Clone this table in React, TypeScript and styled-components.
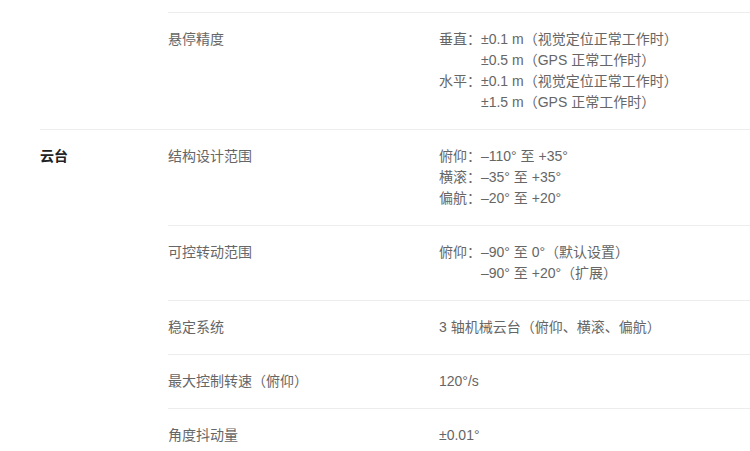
import React from "react";
import styled, { createGlobalStyle } from "styled-components";

const GlobalStyle = createGlobalStyle`
  body {
    margin: 0;
    background: #ffffff;
    font-family: "Liberation Sans", "Noto Sans CJK SC", sans-serif;
  }
`;

const Page = styled.div`
  padding: 12px 0 0 40px;
`;

const Group = styled.div<{ $first?: boolean }>`
  display: grid;
  grid-template-columns: 128px 1fr;
  border-top: ${(p) => (p.$first ? "none" : "1px solid #ededed")};
`;

const Category = styled.div`
  padding: 16px 0;
  font-size: 14px;
  line-height: 21px;
  font-weight: 600;
  color: #222;
`;

const Rows = styled.div`
  display: flex;
  flex-direction: column;
`;

const Row = styled.div<{ $first?: boolean }>`
  display: grid;
  grid-template-columns: 271px 1fr;
  padding: 16px 0;
  border-top: ${(p) => (p.$first ? "none" : "1px solid #ededed")};
  font-size: 14px;
  line-height: 21px;
  color: #666;
`;

const Label = styled.div`
  white-space: nowrap;
`;

const Value = styled.div`
  display: grid;
  grid-template-columns: auto 1fr;
  white-space: nowrap;
`;

const Prefix = styled.span`
  grid-column: 1;
`;

const Text = styled.span`
  grid-column: 2;
`;

type Line = { prefix?: string; text: string };
type Spec = { label: string; lines: Line[] };
type Section = { name: string; specs: Spec[] };

const sections: Section[] = [
  {
    name: "",
    specs: [
      {
        label: "悬停精度",
        lines: [
          { prefix: "垂直：", text: "±0.1 m（视觉定位正常工作时）" },
          { text: "±0.5 m（GPS 正常工作时）" },
          { prefix: "水平：", text: "±0.1 m（视觉定位正常工作时）" },
          { text: "±1.5 m（GPS 正常工作时）" },
        ],
      },
    ],
  },
  {
    name: "云台",
    specs: [
      {
        label: "结构设计范围",
        lines: [
          { prefix: "俯仰：", text: "–110° 至 +35°" },
          { prefix: "横滚：", text: "–35° 至 +35°" },
          { prefix: "偏航：", text: "–20° 至 +20°" },
        ],
      },
      {
        label: "可控转动范围",
        lines: [
          { prefix: "俯仰：", text: "–90° 至 0°（默认设置）" },
          { text: "–90° 至 +20°（扩展）" },
        ],
      },
      { label: "稳定系统", lines: [{ text: "3 轴机械云台（俯仰、横滚、偏航）" }] },
      { label: "最大控制转速（俯仰）", lines: [{ text: "120°/s" }] },
      { label: "角度抖动量", lines: [{ text: "±0.01°" }] },
    ],
  },
];

export default function App() {
  return (
    <>
      <GlobalStyle />
      <Page>
        {sections.map((s, si) => (
          <Group key={si} $first={si === 0}>
            <Category>{s.name}</Category>
            <Rows>
              {s.specs.map((spec, i) => (
                <Row key={spec.label} $first={si > 0 && i === 0}>
                  <Label>{spec.label}</Label>
                  <Value>
                    {spec.lines.map((l, j) => (
                      <React.Fragment key={j}>
                        {l.prefix && <Prefix>{l.prefix}</Prefix>}
                        <Text>{l.text}</Text>
                      </React.Fragment>
                    ))}
                  </Value>
                </Row>
              ))}
            </Rows>
          </Group>
        ))}
      </Page>
    </>
  );
}
